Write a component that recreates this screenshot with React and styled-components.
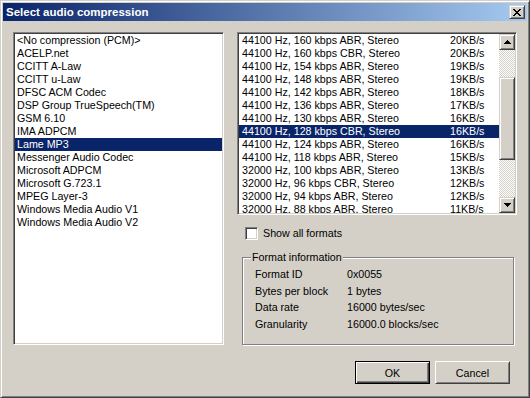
import React from "react";
import styled, { createGlobalStyle, css } from "styled-components";

const Global = createGlobalStyle`
  html, body { margin: 0; padding: 0; background: #D4D0C8; }
  body { font-family: "Liberation Sans", Arial, sans-serif; }
`;

const raised = css`
  border: 1px solid;
  border-color: #D4D0C8 #404040 #404040 #D4D0C8;
  box-shadow: inset 1px 1px #fff, inset -1px -1px #808080;
`;

const sunken = css`
  border: 1px solid;
  border-color: #808080 #fff #fff #808080;
  box-shadow: inset 1px 1px #404040, inset -1px -1px #D4D0C8;
`;

const Window = styled.div`
  width: 530px;
  height: 398px;
  box-sizing: border-box;
  background: #D4D0C8;
  ${raised};
  padding: 2px;
  display: flex;
  flex-direction: column;
  font-family: "Liberation Sans", Arial, sans-serif;
  font-size: 10.7px;
  color: #000;
`;

const TitleBar = styled.div`
  height: 18px;
  flex: none;
  display: flex;
  align-items: center;
  justify-content: space-between;
  padding: 0 2px 0 3px;
  background: linear-gradient(to right, #0A246A, #A6CAF0);
  color: #fff;
  font-weight: bold;
  font-size: 11.5px;
  white-space: nowrap;
`;

const CloseButton = styled.div`
  width: 16px;
  height: 14px;
  box-sizing: border-box;
  background: #D4D0C8;
  ${raised};
  display: flex;
  align-items: center;
  justify-content: center;
`;

const Body = styled.div`
  display: flex;
  gap: 13px;
  padding: 11px 10px 0 10px;
`;

const CodecList = styled.div`
  width: 211px;
  height: 313px;
  box-sizing: border-box;
  background: #fff;
  ${sunken};
  padding: 1px;
  overflow: hidden;
`;

const Item = styled.div`
  height: 13px;
  line-height: 13px;
  padding-left: 2px;
  white-space: nowrap;
  background: ${(p) => (p.$selected ? "#0A246A" : "transparent")};
  color: ${(p) => (p.$selected ? "#fff" : "#000")};
`;

const RightColumn = styled.div`
  width: 280px;
  display: flex;
  flex-direction: column;
`;

const FormatList = styled.div`
  height: 183px;
  box-sizing: border-box;
  background: #fff;
  ${sunken};
  padding: 1px;
  display: flex;
`;

const Rows = styled.div`
  flex: 1;
  overflow: hidden;
`;

const FormatRow = styled.div`
  display: grid;
  grid-template-columns: 208px 1fr;
  height: 13px;
  line-height: 13px;
  padding-left: 3px;
  white-space: nowrap;
  background: ${(p) => (p.$selected ? "#0A246A" : "transparent")};
  color: ${(p) => (p.$selected ? "#fff" : "#000")};
`;

const Scrollbar = styled.div`
  width: 16px;
  flex: none;
  display: flex;
  flex-direction: column;
`;

const ScrollButton = styled.div`
  width: 16px;
  height: 16px;
  flex: none;
  box-sizing: border-box;
  background: #D4D0C8;
  ${raised};
  display: flex;
  align-items: center;
  justify-content: center;
`;

const Track = styled.div`
  flex: 1;
  background-color: #fff;
  background-image: conic-gradient(#D4D0C8 25%, transparent 0 50%, #D4D0C8 0 75%, transparent 0);
  background-size: 2px 2px;
  display: flex;
  flex-direction: column;
`;

const Thumb = styled.div`
  height: ${(p) => p.$size}px;
  margin-top: ${(p) => p.$offset}px;
  box-sizing: border-box;
  background: #D4D0C8;
  ${raised};
`;

const CheckRow = styled.label`
  display: flex;
  align-items: center;
  gap: 5px;
  height: 13px;
  margin: 12px 0 0 8px;
  line-height: 13px;
`;

const CheckBox = styled.span`
  width: 13px;
  height: 13px;
  box-sizing: border-box;
  background: #fff;
  ${sunken};
  flex: none;
`;

const GroupBox = styled.div`
  position: relative;
  margin: 17px 3px 0 5px;
  height: 88px;
  box-sizing: border-box;
  border: 1px solid #808080;
  box-shadow: inset 1px 1px #fff, 1px 1px #fff;
  padding: 8px 0 0 12px;
`;

const GroupLabel = styled.span`
  position: absolute;
  top: -7px;
  left: 8px;
  padding: 0 1px;
  line-height: 13px;
  background: #D4D0C8;
`;

const InfoGrid = styled.div`
  display: grid;
  grid-template-columns: 92px 1fr;
  grid-auto-rows: 16.5px;
  align-items: center;
  white-space: nowrap;
`;

const Footer = styled.div`
  display: flex;
  justify-content: flex-end;
  gap: 5px;
  padding: 16px 17px 0 0;
`;

const Button = styled.button`
  width: 75px;
  height: 23px;
  box-sizing: border-box;
  padding: 0;
  margin: 0;
  background: #D4D0C8;
  font-family: inherit;
  font-size: 10.7px;
  color: #000;
  ${(p) =>
    p.$default
      ? css`
          border: 1px solid #000;
          box-shadow: inset 1px 1px #fff, inset -1px -1px #404040, inset -2px -2px #808080;
        `
      : css`
          border: 1px solid;
          border-color: #fff #404040 #404040 #fff;
          box-shadow: inset 1px 1px #D4D0C8, inset -1px -1px #808080;
        `}
`;

const UpArrow = () => (
  <svg width="7" height="4" viewBox="0 0 7 4" shapeRendering="crispEdges">
    <path d="M3 0h1v1h-1z M2 1h3v1h-3z M1 2h5v1h-5z M0 3h7v1h-7z" fill="#000" />
  </svg>
);

const DownArrow = () => (
  <svg width="7" height="4" viewBox="0 0 7 4" shapeRendering="crispEdges">
    <path d="M0 0h7v1h-7z M1 1h5v1h-5z M2 2h3v1h-3z M3 3h1v1h-1z" fill="#000" />
  </svg>
);

const CloseGlyph = () => (
  <svg width="8" height="7" viewBox="0 0 8 7" shapeRendering="crispEdges">
    <path
      d="M0 0h2v1H0z M6 0h2v1H6z M1 1h2v1H1z M5 1h2v1H5z M2 2h4v1H2z M3 3h2v1H3z M2 4h4v1H2z M1 5h2v1H1z M5 5h2v1H5z M0 6h2v1H0z M6 6h2v1H6z"
      fill="#000"
    />
  </svg>
);

const codecs = [
  "<No compression (PCM)>",
  "ACELP.net",
  "CCITT A-Law",
  "CCITT u-Law",
  "DFSC ACM Codec",
  "DSP Group TrueSpeech(TM)",
  "GSM 6.10",
  "IMA ADPCM",
  "Lame MP3",
  "Messenger Audio Codec",
  "Microsoft ADPCM",
  "Microsoft G.723.1",
  "MPEG Layer-3",
  "Windows Media Audio V1",
  "Windows Media Audio V2",
];

const formats = [
  ["44100 Hz, 160 kbps ABR, Stereo", "20KB/s"],
  ["44100 Hz, 160 kbps CBR, Stereo", "20KB/s"],
  ["44100 Hz, 154 kbps ABR, Stereo", "19KB/s"],
  ["44100 Hz, 148 kbps ABR, Stereo", "19KB/s"],
  ["44100 Hz, 142 kbps ABR, Stereo", "18KB/s"],
  ["44100 Hz, 136 kbps ABR, Stereo", "17KB/s"],
  ["44100 Hz, 130 kbps ABR, Stereo", "16KB/s"],
  ["44100 Hz, 128 kbps CBR, Stereo", "16KB/s"],
  ["44100 Hz, 124 kbps ABR, Stereo", "16KB/s"],
  ["44100 Hz, 118 kbps ABR, Stereo", "15KB/s"],
  ["32000 Hz, 100 kbps ABR, Stereo", "13KB/s"],
  ["32000 Hz, 96 kbps CBR, Stereo", "12KB/s"],
  ["32000 Hz, 94 kbps ABR, Stereo", "12KB/s"],
  ["32000 Hz, 88 kbps ABR, Stereo", "11KB/s"],
];

const info = [
  ["Format ID", "0x0055"],
  ["Bytes per block", "1 bytes"],
  ["Data rate", "16000 bytes/sec"],
  ["Granularity", "16000.0 blocks/sec"],
];

export default function App() {
  return (
    <>
      <Global />
      <Window>
        <TitleBar>
          <span>Select audio compression</span>
          <CloseButton>
            <CloseGlyph />
          </CloseButton>
        </TitleBar>
        <Body>
          <CodecList>
            {codecs.map((c) => (
              <Item key={c} $selected={c === "Lame MP3"}>
                {c}
              </Item>
            ))}
          </CodecList>
          <RightColumn>
            <FormatList>
              <Rows>
                {formats.map(([f, r], i) => (
                  <FormatRow key={f} $selected={i === 7}>
                    <span>{f}</span>
                    <span>{r}</span>
                  </FormatRow>
                ))}
              </Rows>
              <Scrollbar>
                <ScrollButton>
                  <UpArrow />
                </ScrollButton>
                <Track>
                  <Thumb $offset={27} $size={83} />
                </Track>
                <ScrollButton>
                  <DownArrow />
                </ScrollButton>
              </Scrollbar>
            </FormatList>
            <CheckRow>
              <CheckBox />
              <span>Show all formats</span>
            </CheckRow>
            <GroupBox>
              <GroupLabel>Format information</GroupLabel>
              <InfoGrid>
                {info.map(([k, v]) => (
                  <React.Fragment key={k}>
                    <span>{k}</span>
                    <span>{v}</span>
                  </React.Fragment>
                ))}
              </InfoGrid>
            </GroupBox>
          </RightColumn>
        </Body>
        <Footer>
          <Button $default>OK</Button>
          <Button>Cancel</Button>
        </Footer>
      </Window>
    </>
  );
}
